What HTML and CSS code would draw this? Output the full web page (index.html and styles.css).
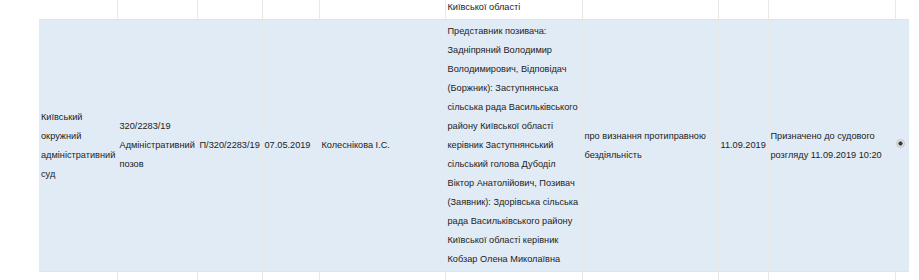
FILE: index.html
```html
<!DOCTYPE html>
<html lang="uk">
<head>
<meta charset="utf-8">
<link rel="stylesheet" href="styles.css">
</head>
<body>
<div class="page">
<table class="cases">
  <colgroup>
    <col class="c1"><col class="c2"><col class="c3"><col class="c4"><col class="c5">
    <col class="c6"><col class="c7"><col class="c8"><col class="c9"><col class="c10">
  </colgroup>
  <tbody>
    <tr class="row">
      <td></td><td></td><td></td><td></td><td></td>
      <td>Київської області</td><td></td><td></td><td></td><td></td>
    </tr>
    <tr class="row row-active">
      <td>Київський окружний адміністративний суд</td>
      <td>320/2283/19 Адміністративний позов</td>
      <td>П/320/2283/19</td>
      <td>07.05.2019</td>
      <td>Колеснікова І.С.</td>
      <td>Представник позивача: Задніпряний Володимир Володимирович, Відповідач (Боржник): Заступнянська сільська рада Васильківського району Київської області керівник Заступнянський сільський голова Дубоділ Віктор Анатолійович, Позивач (Заявник): Здорівська сільська рада Васильківського району Київської області керівник Кобзар Олена Миколаївна</td>
      <td>про визнання протиправною бездіяльність</td>
      <td>11.09.2019</td>
      <td>Призначено до судового розгляду 11.09.2019 10:20</td>
      <td class="sel"><span class="radio"></span></td>
    </tr>
    <tr class="row row-empty">
      <td></td><td></td><td></td><td></td><td></td>
      <td></td><td></td><td></td><td></td><td></td>
    </tr>
  </tbody>
</table>
</div>
</body>
</html>
```
FILE: styles.css
```css
html, body {
  margin: 0;
  padding: 0;
  background: #ffffff;
}
.page {
  padding-left: 39px;
  overflow: hidden;
  height: 280px;
}
.cases {
  margin-top: -4px;
  border-collapse: collapse;
  table-layout: fixed;
  width: 870px;
  font-family: "Liberation Sans", Arial, sans-serif;
  font-size: 9.2px;
  line-height: 19px;
  color: #222222;
}
.c1 { width: 78px; }
.c2 { width: 80px; }
.c3 { width: 65px; }
.c4 { width: 57px; }
.c5 { width: 126px; }
.c6 { width: 137px; }
.c7 { width: 136px; }
.c8 { width: 50px; }
.c9 { width: 127px; }
.c10 { width: 14px; }
.cases td {
  padding: 2px 0 2px 2px;
  vertical-align: middle;
  border-left: 1px solid #e9e9e9;
  border-bottom: 1px solid #e3e3e3;
  overflow: visible;
}
.cases td:first-child {
  border-left: none;
}
.row-active td {
  background: #e1ebf6;
}
.row-empty td {
  height: 30px;
}
.cases td.sel {
  text-align: center;
  padding: 0 3px 4px 0;
}
.radio {
  display: inline-block;
  width: 7px;
  height: 7px;
  border-radius: 50%;
  border: 1px solid #c4c4c4;
  background: radial-gradient(circle, #3a3a3a 0 1.8px, #e2e2e2 2.4px, #f4f4f4 100%);
  vertical-align: middle;
}
```
